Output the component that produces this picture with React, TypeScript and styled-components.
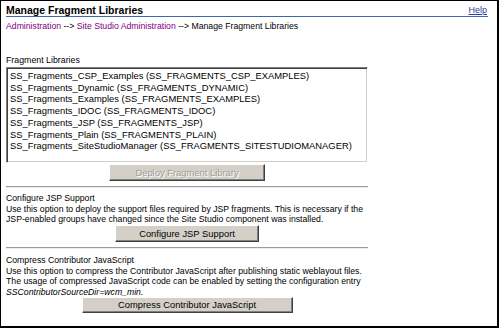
import React from "react";
import styled, { createGlobalStyle } from "styled-components";

const GlobalStyle = createGlobalStyle`
  html, body { margin: 0; padding: 0; background: #fff; }
  body { font-family: "Liberation Sans", Arial, sans-serif; color: #000; }
`;

const Frame = styled.div`
  box-sizing: border-box;
  width: 499px;
  height: 328px;
  border-top: 1px solid #000;
  border-left: 1px solid #000;
  border-right: 2px solid #000;
  border-bottom: 2px solid #000;
  padding: 0 9px 0 5px;
  display: flex;
  flex-direction: column;
`;

const Header = styled.div`
  display: flex;
  justify-content: space-between;
  align-items: flex-end;
  height: 15px;
  border-bottom: 1px solid #3d68ad;
`;

const Title = styled.h1`
  margin: 0;
  font-size: 10.5px;
  font-weight: bold;
  line-height: 12px;
`;

const HelpLink = styled.a`
  font-size: 9px;
  line-height: 12px;
  color: #2b3f9e;
  text-decoration: underline;
  margin-right: 1px;
`;

const Crumbs = styled.div`
  margin-top: 4px;
  font-size: 8.7px;
  line-height: 11px;
`;

const CrumbLink = styled.a`
  color: #800080;
  text-decoration: none;
`;

const Content = styled.div`
  width: 362px;
  display: flex;
  flex-direction: column;
`;

const Label = styled.div<{ $top: number }>`
  margin-top: ${(p) => p.$top}px;
  font-size: 8.8px;
  line-height: 11px;
`;

const ListBox = styled.div`
  box-sizing: border-box;
  height: 96px;
  border-style: solid;
  border-width: 1px;
  border-color: #808080 #fff #fff #808080;
  box-shadow: inset 1px 1px 0 #404040, inset -1px -1px 0 #d4d0c8;
  padding: 2px 3px;
  margin-top: 1px;
`;

const Option = styled.div`
  font-size: 9.4px;
  line-height: 11.7px;
  white-space: nowrap;
`;

const Button = styled.button<{ $width: number; $height: number; $top: number }>`
  box-sizing: border-box;
  align-self: center;
  width: ${(p) => p.$width}px;
  height: ${(p) => p.$height}px;
  margin-top: ${(p) => p.$top}px;
  padding: 0;
  background: #d4d0c8;
  border-style: solid;
  border-width: 1px;
  border-color: #fff #404040 #404040 #fff;
  box-shadow: inset -1px -1px 0 #808080;
  font-family: "Liberation Sans", Arial, sans-serif;
  font-size: 9.4px;
  line-height: 1;
  color: #000;
  &:disabled {
    color: #a19e97;
    text-shadow: 1px 1px 0 #fff;
  }
`;

const Rule = styled.hr<{ $top: number }>`
  width: 100%;
  margin: ${(p) => p.$top}px 0 0;
  border: none;
  border-top: 1px solid #9c9c9c;
  border-bottom: 1px solid #ececec;
  height: 0;
`;

const Section = styled.div<{ $top: number; $leading: number }>`
  display: flex;
  flex-direction: column;
  padding-top: ${(p) => p.$top}px;
  font-size: 8.7px;
  line-height: ${(p) => p.$leading}px;
`;

const Text = styled.div``;

const Italic = styled.div`
  font-style: italic;
`;

const libraries = [
  "SS_Fragments_CSP_Examples (SS_FRAGMENTS_CSP_EXAMPLES)",
  "SS_Fragments_Dynamic (SS_FRAGMENTS_DYNAMIC)",
  "SS_Fragments_Examples (SS_FRAGMENTS_EXAMPLES)",
  "SS_Fragments_IDOC (SS_FRAGMENTS_IDOC)",
  "SS_Fragments_JSP (SS_FRAGMENTS_JSP)",
  "SS_Fragments_Plain (SS_FRAGMENTS_PLAIN)",
  "SS_Fragments_SiteStudioManager (SS_FRAGMENTS_SITESTUDIOMANAGER)",
];

export default function App() {
  return (
    <>
      <GlobalStyle />
      <Frame>
        <Header>
          <Title>Manage Fragment Libraries</Title>
          <HelpLink href="#">Help</HelpLink>
        </Header>
        <Crumbs>
          <CrumbLink href="#">Administration</CrumbLink> --&gt;{" "}
          <CrumbLink href="#">Site Studio Administration</CrumbLink> --&gt; Manage Fragment Libraries
        </Crumbs>
        <Content>
          <Label $top={23}>Fragment Libraries</Label>
          <ListBox>
            {libraries.map((l) => (
              <Option key={l}>{l}</Option>
            ))}
          </ListBox>
          <Button $width={156} $height={17} $top={1} disabled>
            Deploy Fragment Library
          </Button>
          <Rule $top={5} />
          <Section $top={5} $leading={10.7}>
            <Text>Configure JSP Support</Text>
            <Text>
              Use this option to deploy the support files required by JSP fragments. This is necessary if the
              JSP-enabled groups have changed since the Site Studio component was installed.
            </Text>
            <Button $width={144} $height={17} $top={0}>
              Configure JSP Support
            </Button>
          </Section>
          <Rule $top={5} />
          <Section $top={6} $leading={10.5}>
            <Text>Compress Contributor JavaScript</Text>
            <Text>
              Use this option to compress the Contributor JavaScript after publishing static weblayout files.
              The usage of compressed JavaScript code can be enabled by setting the configuration entry
            </Text>
            <Italic>SSContributorSourceDir=wcm_min.</Italic>
            <Button $width={211} $height={16} $top={0}>
              Compress Contributor JavaScript
            </Button>
          </Section>
        </Content>
      </Frame>
    </>
  );
}
